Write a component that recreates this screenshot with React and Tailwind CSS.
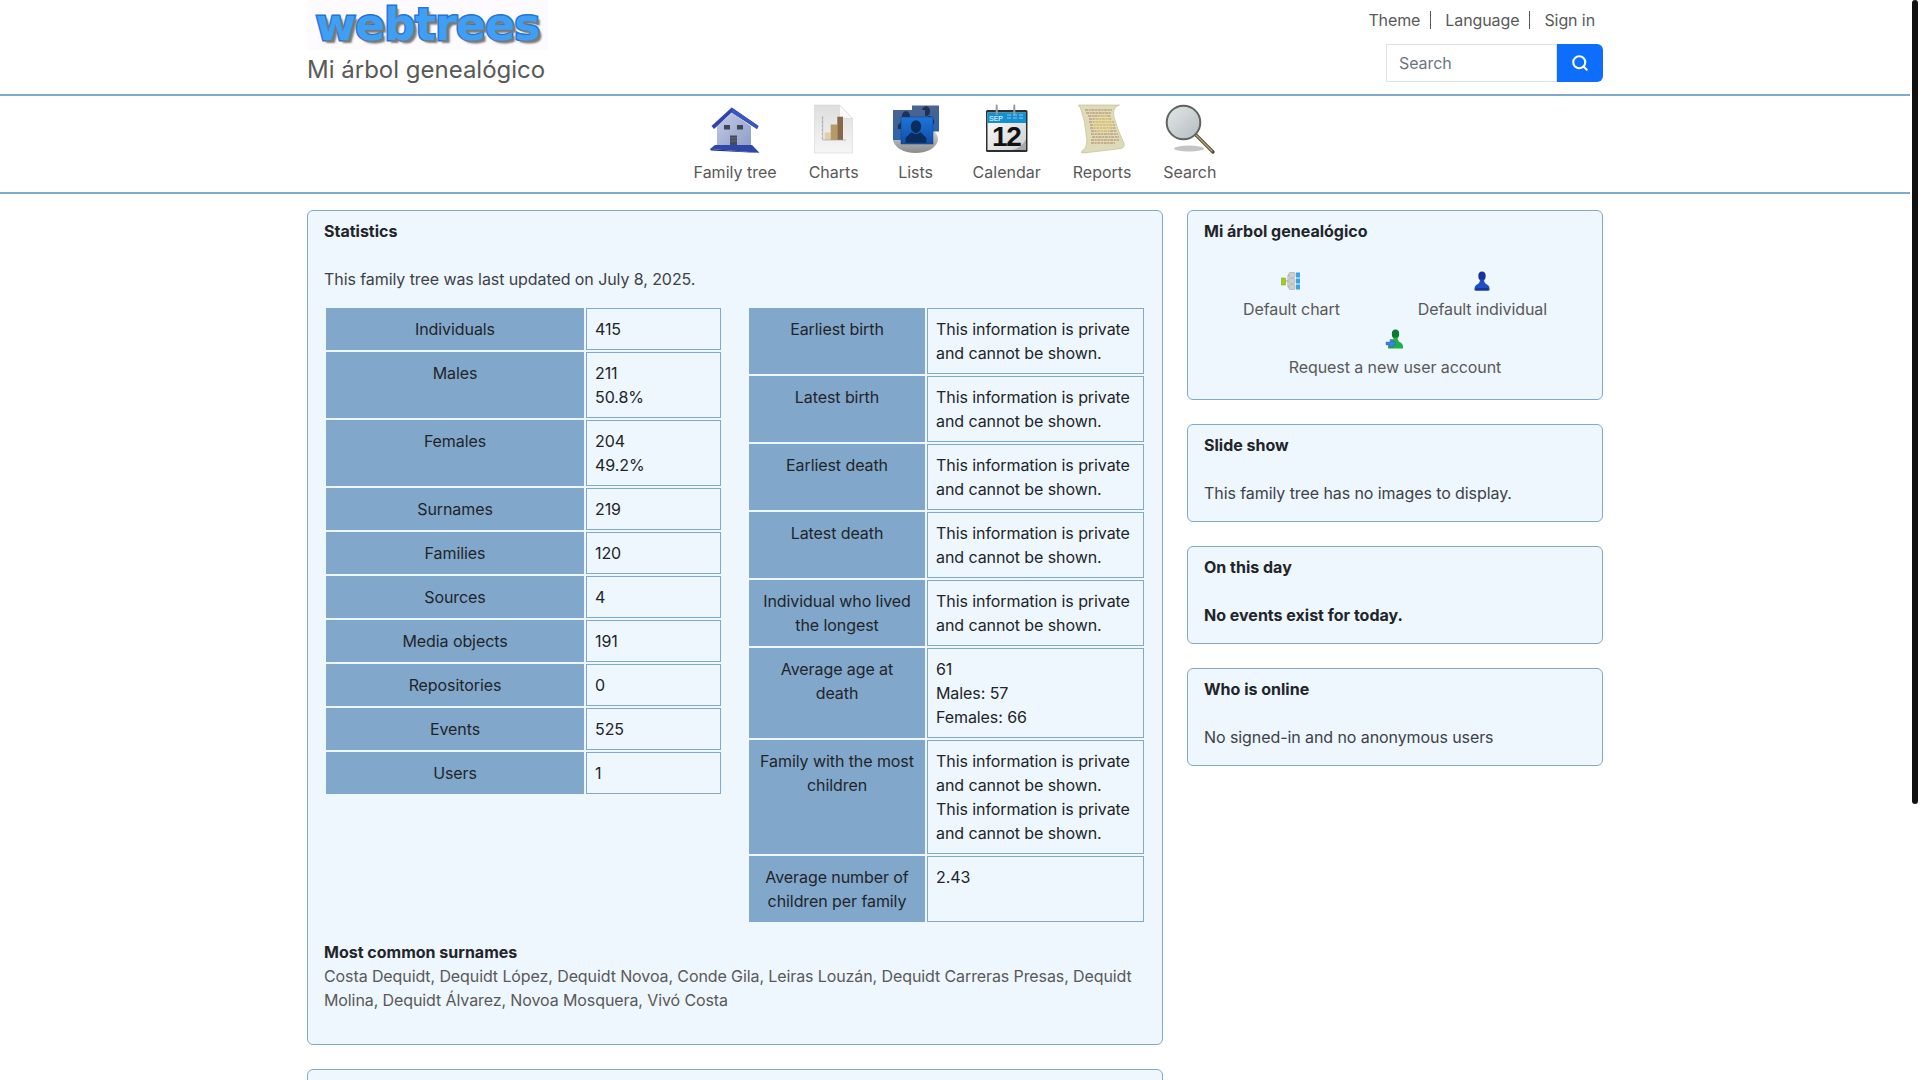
import React from "react";
import { Search } from "lucide-react";

const privateText = "This information is private and cannot be shown.";

const leftRows = [
  ["Individuals", ["415"]],
  ["Males", ["211", "50.8%"]],
  ["Females", ["204", "49.2%"]],
  ["Surnames", ["219"]],
  ["Families", ["120"]],
  ["Sources", ["4"]],
  ["Media objects", ["191"]],
  ["Repositories", ["0"]],
  ["Events", ["525"]],
  ["Users", ["1"]],
];

const rightRows = [
  ["Earliest birth", [privateText]],
  ["Latest birth", [privateText]],
  ["Earliest death", [privateText]],
  ["Latest death", [privateText]],
  ["Individual who lived the longest", [privateText]],
  ["Average age at death", ["61", "Males: 57", "Females: 66"]],
  ["Family with the most children", [privateText, privateText]],
  ["Average number of children per family", ["2.43"]],
];

const surnames = [
  "Costa Dequidt",
  "Dequidt López",
  "Dequidt Novoa",
  "Conde Gila",
  "Leiras Louzán",
  "Dequidt Carreras Presas",
  "Dequidt Molina",
  "Dequidt Álvarez",
  "Novoa Mosquera",
  "Vivó Costa",
];

const HouseIcon = () => (
  <svg viewBox="0 0 50 50" className="w-[50px] h-[50px]">
    <defs>
      <linearGradient id="wall" x1="0" y1="0" x2="1" y2="1">
        <stop offset="0" stopColor="#c3cbe6" />
        <stop offset="1" stopColor="#8f9cc8" />
      </linearGradient>
    </defs>
    <path d="M7 22 L22 9 L41 22 V43 H7 Z" fill="url(#wall)" />
    <path d="M1.5 22 L21.7 3.5 L48.5 22 L47 25 L21.7 8.5 L4 25 Z" fill="#2f45ab" />
    <path d="M21.7 3.5 L48.5 22 L47 25 L21.7 8.5 Z" fill="#3a55c4" />
    <rect x="14" y="21" width="6" height="4.5" fill="#3d4557" />
    <rect x="27" y="21" width="6" height="4.5" fill="#3d4557" />
    <rect x="20" y="31.5" width="7" height="10" fill="#454c57" />
    <path d="M20 34 H27 M20 37 H27" stroke="#7c8494" strokeWidth="0.6" />
    <path d="M5 41 L42 41 L49.5 48.8 L0 45 Z" fill="#2f47a8" />
    <path d="M0 45 L49.5 48.8 L45 48.8 L1 46.5 Z" fill="#1f2f7d" />
  </svg>
);

const ChartsIcon = () => (
  <svg viewBox="0 0 50 50" className="w-[50px] h-[50px]">
    <defs>
      <linearGradient id="paper" x1="0" y1="0" x2="0" y2="1">
        <stop offset="0" stopColor="#dedede" />
        <stop offset="1" stopColor="#f6f6f6" />
      </linearGradient>
    </defs>
    <path d="M5.5 1 H30.5 L43.5 14.5 V49 H5.5 Z" fill="url(#paper)" stroke="#cfcfcf" strokeWidth="0.5" />
    <path d="M30.5 1 L43.5 14.5 H32 Q30.5 14.5 30.5 13 Z" fill="#fbfbfb" stroke="#cfcfcf" strokeWidth="0.5" />
    <rect x="15.7" y="28.5" width="6" height="7.5" fill="#ddd0a8" />
    <rect x="21.7" y="20.5" width="6.6" height="15.5" fill="#b59a66" />
    <rect x="28.3" y="12.7" width="5.7" height="23.3" fill="#87694a" />
    <path d="M13.7 12 V36 H37" fill="none" stroke="#9a9a9a" strokeWidth="0.6" />
    <path d="M12.5 14 H14 M12.5 18 H14 M12.5 22 H14 M12.5 26 H14 M12.5 30 H14 M12.5 34 H14" stroke="#8a8a8a" strokeWidth="0.5" />
  </svg>
);

const Silhouette = ({ x, y, s, fill }) => (
  <g transform={`translate(${x} ${y}) scale(${s})`} fill={fill}>
    <ellipse cx="0" cy="-3" rx="4.5" ry="5.5" />
    <path d="M-4 2 Q0 5 4 2 L9 7 V11 H-9 V7 Z" />
  </g>
);

const ListsIcon = () => (
  <svg viewBox="0 0 50 50" className="w-[50px] h-[50px]">
    <defs>
      <linearGradient id="disk" x1="0" y1="0" x2="0" y2="1">
        <stop offset="0" stopColor="#e4e4e4" />
        <stop offset="1" stopColor="#8b8b8b" />
      </linearGradient>
      <linearGradient id="card" x1="0" y1="0" x2="0" y2="1">
        <stop offset="0" stopColor="#1d74d9" />
        <stop offset="1" stopColor="#0f4fa8" />
      </linearGradient>
      <linearGradient id="cardBack" x1="0" y1="0" x2="0" y2="1">
        <stop offset="0" stopColor="#4a648f" />
        <stop offset="1" stopColor="#2c64ad" />
      </linearGradient>
    </defs>
    <ellipse cx="24.5" cy="35" rx="22.5" ry="14" fill="url(#disk)" />
    <rect x="21" y="1.5" width="27" height="26" fill="url(#cardBack)" />
    <Silhouette x={35} y={10} s={0.9} fill="#1f3150" />
    <rect x="2" y="6" width="32" height="30" fill="url(#cardBack)" />
    <Silhouette x={15} y={15} s={0.9} fill="#1f3150" />
    <rect x="10" y="13" width="32" height="27" fill="url(#card)" stroke="#0b3f8c" strokeWidth="0.5" />
    <Silhouette x={25} y={26} s={1.15} fill="#0a2c5c" />
  </svg>
);

const CalendarIcon = () => (
  <svg viewBox="0 0 50 50" className="w-[50px] h-[50px]">
    <defs>
      <linearGradient id="sheet" x1="0" y1="0" x2="1" y2="1">
        <stop offset="0" stopColor="#ffffff" />
        <stop offset="1" stopColor="#cfcfcf" />
      </linearGradient>
    </defs>
    <rect x="4" y="6" width="41.5" height="42" rx="1.5" fill="#2b2f33" />
    <rect x="5.5" y="8.5" width="38.5" height="37.5" fill="url(#sheet)" />
    <rect x="5.5" y="8.5" width="38.5" height="10.5" fill="#1390cf" />
    <path d="M14.7 1.5 V10 M32.3 1.5 V10" stroke="#9a9a9a" strokeWidth="2" strokeLinecap="round" />
    <text x="7" y="16.5" fontSize="7" fill="#ffffff" fontFamily="'Liberation Sans', sans-serif">SEP</text>
    <path d="M25 11 H29 M31 11 H35 M37 11 H41 M25 14 H29 M31 14 H35 M37 14 H41" stroke="#8ccbea" strokeWidth="1" />
    <text x="24.2" y="41.5" textAnchor="middle" fontSize="28" fontWeight="700" letterSpacing="-1.5" fill="#111111" fontFamily="'Liberation Sans', sans-serif">12</text>
    <path d="M30 46 Q40 44 44 35 V46 Z" fill="#a8a8a8" />
  </svg>
);

const ScrollIcon = () => (
  <svg viewBox="0 0 50 50" className="w-[50px] h-[50px]">
    <path
      d="M1.5 1 H42.5 Q35 3 37 13 Q41 26 45 35 Q50 43 44 44.5 L7 49 Q3 49 5 47 Q12 43 9 30 Q8 17 5 9 Q3.5 3 1.5 1 Z"
      fill="#dedbb8"
      stroke="#b9b690"
      strokeWidth="0.6"
    />
    <path
      d="M8 6 H35 M9 9 H34 M11 12 H34 M12 15 H35 M12 18 H37 M13 21 H38 M13 24 H39 M14 27 H40 M14 30 H41 M15 33 H42 M14 36 H42 M14 39 H38"
      stroke="#a0684a"
      strokeWidth="0.9"
      strokeDasharray="3 0.7 2 0.7"
      opacity="0.85"
    />
    <ellipse cx="26" cy="20" rx="10" ry="9" fill="#f3e27d" opacity="0.35" />
  </svg>
);

const MagnifierIcon = () => (
  <svg viewBox="0 0 50 50" className="w-[50px] h-[50px]">
    <defs>
      <linearGradient id="lens" x1="0" y1="0" x2="1" y2="1">
        <stop offset="0" stopColor="#e3e7e9" />
        <stop offset="1" stopColor="#b3bcc1" />
      </linearGradient>
    </defs>
    <ellipse cx="24" cy="44.5" rx="15" ry="3" fill="#c4c4c4" />
    <path d="M31 31 L48 48" stroke="#4e4a36" strokeWidth="3.2" strokeLinecap="round" />
    <path d="M31 31 L47 47" stroke="#b3a673" strokeWidth="1.4" strokeLinecap="round" />
    <circle cx="18.5" cy="18.5" r="16.8" fill="url(#lens)" stroke="#62625e" strokeWidth="2" />
  </svg>
);

const TreeIcon = () => (
  <svg viewBox="0 0 20 20" className="block w-5 h-5">
    <rect x="0.5" y="7" width="4" height="7" fill="#a3cc1f" stroke="#7d9c14" strokeWidth="0.5" />
    <path d="M4.5 10 H7 M7 4 V16 M7 4 H8 M7 16 H8" stroke="#8a8a8a" strokeWidth="0.7" fill="none" />
    <rect x="8" y="1.5" width="6" height="5" rx="1" fill="#cfcfcf" stroke="#999999" strokeWidth="0.5" />
    <rect x="8" y="7.5" width="6" height="5" rx="1" fill="#cfcfcf" stroke="#999999" strokeWidth="0.5" />
    <rect x="8" y="13.5" width="6" height="5" rx="1" fill="#cfcfcf" stroke="#999999" strokeWidth="0.5" />
    <rect x="15" y="1.5" width="4" height="5" fill="#36a5e8" />
    <rect x="15" y="7.5" width="4" height="5" fill="#36a5e8" />
    <rect x="15" y="13.5" width="4" height="5" fill="#36a5e8" />
  </svg>
);

const PersonIcon = () => (
  <svg viewBox="0 0 20 20" className="block w-5 h-5">
    <ellipse cx="10" cy="5" rx="3.7" ry="4.5" fill="#17329c" />
    <path d="M8 8.5 H12 Q12 12 15 13.5 Q18 15 17.5 19.5 H2.5 Q2 15 5 13.5 Q8 12 8 8.5 Z" fill="#1f4fc2" />
    <path d="M3.5 17 H16.5 V19.5 H3.5 Z" fill="#163596" />
  </svg>
);

const NewUserIcon = () => (
  <svg viewBox="0 0 20 20" className="block w-5 h-5">
    <ellipse cx="10.5" cy="5" rx="3.7" ry="4.5" fill="#0c7a2e" />
    <path d="M8.5 8.5 H12.5 Q12.5 12 15.5 13.5 Q18.5 15 18 19.5 H3 Q2.5 15 5.5 13.5 Q8.5 12 8.5 8.5 Z" fill="#1fb043" />
    <path d="M5 10.5 H8 V13 H10.5 V16 H8 V18.5 H5 V16 H1 V13 H5 Z" fill="#3f7fe0" stroke="#2a5cb0" strokeWidth="0.4" />
  </svg>
);

const navItems = [
  ["Family tree", HouseIcon],
  ["Charts", ChartsIcon],
  ["Lists", ListsIcon],
  ["Calendar", CalendarIcon],
  ["Reports", ScrollIcon],
  ["Search", MagnifierIcon],
];

const Card = ({ title, children }) => (
  <div className="border border-[#81a9cb] rounded-md bg-[#eef6fe]">
    <div className="px-4 pt-2 pb-2 font-bold tracking-normal text-[#212529]">{title}</div>
    <div className="px-4 pt-4 pb-4">{children}</div>
  </div>
);

const StatTable = ({ rows, thWidth }) => (
  <table className="w-full table-fixed border-separate border-spacing-[2px]">
    <tbody>
      {rows.map(([label, values]) => (
        <tr key={label}>
          <th className={`${thWidth} bg-[#81a7cb] px-2 py-2 border border-[#81a7cb] font-normal text-center align-top text-[#212529]`}>
            {label}
          </th>
          <td className="px-2 py-2 border border-[#81a9cb] align-top text-[#212529]">
            {values.map((v, i) => (
              <div key={i}>{v}</div>
            ))}
          </td>
        </tr>
      ))}
    </tbody>
  </table>
);

const LinkItem = ({ icon: Icon, label }) => (
  <a href="#" className="flex flex-col items-center mb-1 text-[#595959]">
    <span className="pt-1 pb-[6px]">
      <Icon />
    </span>
    <span>{label}</span>
  </a>
);

export default function App() {
  return (
    <div className="h-screen flex overflow-hidden bg-white text-base tracking-[-0.08px] text-[#212529] font-['Inter',sans-serif]">
      <div className="w-[1910px] shrink-0">
        {/* Header */}
        <header className="h-[96px] border-b-2 border-[#81a9cb]">
          <div className="w-[1320px] mx-auto px-3 flex justify-between">
            <div>
              <div className="w-[241px] h-[50px] bg-[#fdfbff] flex items-center justify-center">
                <span className="font-['DejaVu_Sans',sans-serif] font-bold text-[44px] leading-none tracking-[-0.8px] text-[#3f9ff4] [-webkit-text-stroke:3px_#2274d8] [paint-order:stroke_fill] [text-shadow:3px_3px_2px_#7a7a7a]">
                  webtrees
                </span>
              </div>
              <div className="mt-[2px] text-2xl leading-9 tracking-normal text-[#595959]">Mi árbol genealógico</div>
            </div>
            <div className="flex flex-col items-end">
              <div className="flex items-center h-6 mt-2 pr-2 tracking-[-0.1px] text-[#595959]">
                <a href="#" className="h-[18px] flex items-center border-r border-[#595959] pr-[10px] mr-[14px]">Theme</a>
                <a href="#" className="h-[18px] flex items-center border-r border-[#595959] pr-[10px] mr-[14px]">Language</a>
                <a href="#">Sign in</a>
              </div>
              <div className="flex mt-3">
                <input
                  placeholder="Search"
                  className="w-[171px] h-[38px] px-3 border border-[#dee2e6] bg-white outline-none placeholder:text-[#6c757d]"
                />
                <button className="w-[46px] h-[38px] bg-[#0d6efd] rounded-r-md flex items-center justify-center text-white">
                  <Search className="w-[18px] h-[18px]" strokeWidth={2.75} />
                </button>
              </div>
            </div>
          </div>
        </header>

        {/* Menu */}
        <nav className="h-[98px] border-b-2 border-[#81a9cb] flex justify-center tracking-normal">
          {navItems.map(([label, Icon]) => (
            <a key={label} href="#" className="px-4 pt-2 flex flex-col items-center text-[#595959]">
              <Icon />
              <span className="mt-[6px]">{label}</span>
            </a>
          ))}
        </nav>

        {/* Content */}
        <main className="w-[1320px] mx-auto px-3 pt-4 grid grid-cols-[856px_416px] gap-6">
          <div className="flex flex-col gap-6">
            <Card title="Statistics">
              <p className="mb-[15px] text-[#3d4248]">This family tree was last updated on July 8, 2025.</p>
              <div className="grid grid-cols-2 gap-6 items-start">
                <StatTable rows={leftRows} thWidth="w-[258px]" />
                <StatTable rows={rightRows} thWidth="w-[176px]" />
              </div>
              <div className="mt-4 font-bold tracking-normal">Most common surnames</div>
              <div className="mb-4 tracking-[-0.1px] text-[#595959]">
                {surnames.map((name, i) => (
                  <React.Fragment key={name}>
                    <a href="#">{name}</a>
                    {i < surnames.length - 1 ? ", " : ""}
                  </React.Fragment>
                ))}
              </div>
            </Card>
            <div className="h-[360px] border border-[#81a9cb] rounded-md bg-[#eef6fe]" />
          </div>

          <div className="flex flex-col gap-6">
            <Card title="Mi árbol genealógico">
              <div className="flex flex-wrap justify-around">
                <LinkItem icon={TreeIcon} label="Default chart" />
                <LinkItem icon={PersonIcon} label="Default individual" />
                <LinkItem icon={NewUserIcon} label="Request a new user account" />
              </div>
            </Card>
            <Card title="Slide show">
              <p className="text-[#3d4248]">This family tree has no images to display.</p>
            </Card>
            <Card title="On this day">
              <p className="font-bold tracking-normal">No events exist for today.</p>
            </Card>
            <Card title="Who is online">
              <p className="text-[#3d4248]">No signed-in and no anonymous users</p>
            </Card>
          </div>
        </main>
      </div>

      {/* Scrollbar */}
      <div className="w-[10px] shrink-0 flex justify-center">
        <div className="w-[6px] h-[804px] bg-[#111111] rounded-full" />
      </div>
    </div>
  );
}
